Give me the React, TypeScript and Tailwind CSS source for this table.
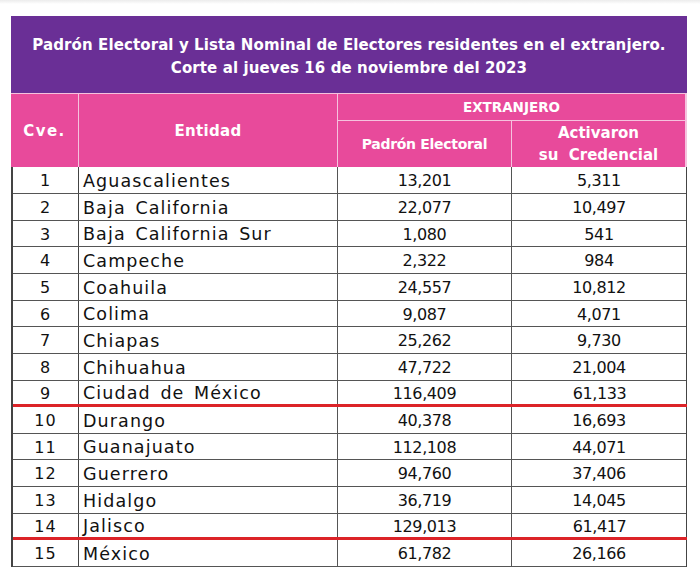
const rows: [string, string, string, string][] = [
  ['1', 'Aguascalientes', '13,201', '5,311'],
  ['2', 'Baja California', '22,077', '10,497'],
  ['3', 'Baja California Sur', '1,080', '541'],
  ['4', 'Campeche', '2,322', '984'],
  ['5', 'Coahuila', '24,557', '10,812'],
  ['6', 'Colima', '9,087', '4,071'],
  ['7', 'Chiapas', '25,262', '9,730'],
  ['8', 'Chihuahua', '47,722', '21,004'],
  ['9', 'Ciudad de México', '116,409', '61,133'],
  ['10', 'Durango', '40,378', '16,693'],
  ['11', 'Guanajuato', '112,108', '44,071'],
  ['12', 'Guerrero', '94,760', '37,406'],
  ['13', 'Hidalgo', '36,719', '14,045'],
  ['14', 'Jalisco', '129,013', '61,417'],
  ['15', 'México', '61,782', '26,166'],
]

// row heights so the grid lines land on the picture's
const heights = ['h-[27px]', 'h-[27px]', 'h-[26px]', 'h-[27px]', 'h-[27px]', 'h-[26px]', 'h-[27px]', 'h-[27px]', 'h-[26px]', 'h-[27px]', 'h-[26px]', 'h-[27px]', 'h-[27px]', 'h-[26px]', 'h-[27px]']

export default function App() {
  return (
    <div className="w-[700px] h-[579px] bg-white overflow-hidden relative">
      <div className="h-[4px] bg-gradient-to-b from-[#ececec] to-white" />
      <div className="ml-[11px] mt-[12px] w-[676px] font-['DejaVu_Sans',sans-serif]">
        {/* title */}
        <div className="h-[77px] bg-[#6a2f96] flex flex-col items-center justify-center text-white font-bold text-[15px] leading-[23px] pt-[4px] tracking-[0.1px]">
          <div>Padrón Electoral y Lista Nominal de Electores residentes en el extranjero.</div>
          <div>Corte al jueves 16 de noviembre del 2023</div>
        </div>

        {/* header */}
        <div className="flex h-[74px] bg-[#e84a9b] text-white font-bold text-[14px] border-t border-[#f5c2de]">
          <div className="w-[68px] flex items-center justify-center border-r border-[#f5c2de] pt-[2px] text-[15px] tracking-[1.5px]">Cve.</div>
          <div className="w-[259px] flex items-center justify-center border-r border-[#f5c2de] pt-[1px] text-[15px] tracking-[0.3px]">Entidad</div>
          <div className="flex-1 flex flex-col border-r-2 border-[#f5c2de]">
            <div className="h-[27px] flex items-center justify-center border-b border-[#f5c2de] text-[13.5px]">EXTRANJERO</div>
            <div className="flex-1 flex">
              <div className="w-[174px] flex items-center justify-center border-r border-[#f5c2de] tracking-[-0.3px]">Padrón Electoral</div>
              <div className="flex-1 flex flex-col items-center justify-center leading-[22px] text-[15px]">
                <span>Activaron</span>
                <span className="whitespace-pre">su  Credencial</span>
              </div>
            </div>
          </div>
        </div>

        {/* data rows */}
        <div className="border-l-2 border-r border-[#444] text-[16px] text-[#111]">
          {rows.map((r, i) => {
            const red = i === 8 || i === 13
            return (
              <div
                key={r[0]}
                className={`flex ${heights[i]} ${red ? 'border-b-[3px] border-b-[#dc2328] -mr-px' : 'border-b border-b-[#555]'}`}
              >
                <div className="w-[66px] flex items-center justify-center border-r border-[#444] pt-[2px] tracking-[1px]">{r[0]}</div>
                <div className="w-[259px] flex items-center pl-[4px] border-r border-[#555] pt-[2px] text-[17.5px] tracking-[1.1px] [word-spacing:3px]">{r[1]}</div>
                <div className="w-[174px] flex items-center justify-center border-r border-[#555] pt-[2px] tracking-[-0.4px]">{r[2]}</div>
                <div className="flex-1 flex items-center justify-center pt-[2px] tracking-[-0.4px]">{r[3]}</div>
              </div>
            )
          })}
        </div>
      </div>
    </div>
  )
}
